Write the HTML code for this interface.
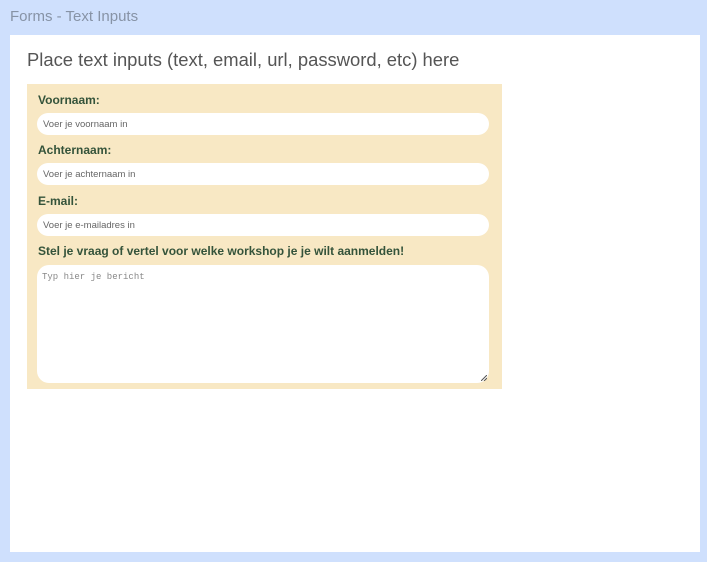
<!DOCTYPE html>
<html><head><style>
*{margin:0;padding:0;box-sizing:border-box}
body{width:707px;height:562px;background:#cfe0fd;font-family:"Liberation Sans",sans-serif;position:relative;overflow:hidden}
.t{position:absolute;left:10px;top:8px;font-size:15px;color:#8793a6}
.p{position:absolute;left:10px;top:35px;width:690px;height:517px;background:#fff}
.h{position:absolute;left:27px;top:49px;font-size:18.4px;color:#555}
.f{position:absolute;left:27px;top:84px;width:475px;height:305px;background:#f8e8c4}
.l{position:absolute;left:11px;font-size:12px;font-weight:bold;color:#34533a;top:0}
.i{position:absolute;left:10px;width:452px;height:22px;background:#fff;border-radius:11px;font-size:9.5px;color:#666;padding:6px 0 0 6px}
.ta{position:absolute;left:10px;top:181px;width:452px;height:118px;background:#fff;border-radius:12px;font-family:"Liberation Mono",monospace;font-size:9px;color:#888;padding:7px 0 0 5px}
</style></head><body>
<div class="t">Forms - Text Inputs</div>
<div class="p"></div>
<div class="h">Place text inputs (text, email, url, password, etc) here</div>
<div class="f">
<div class="l" style="top:9px">Voornaam:</div>
<div class="i" style="top:29px">Voer je voornaam in</div>
<div class="l" style="top:59px">Achternaam:</div>
<div class="i" style="top:79px">Voer je achternaam in</div>
<div class="l" style="top:110px">E-mail:</div>
<div class="i" style="top:130px">Voer je e-mailadres in</div>
<div class="l" style="top:160px">Stel je vraag of vertel voor welke workshop je je wilt aanmelden!</div>
<div class="ta">Typ hier je bericht
<svg style="position:absolute;right:2px;bottom:2px" width="6" height="6"><path d="M0 6L6 0M3 6L6 3" stroke="#555" stroke-width="1"/></svg></div>
</div>
</body></html>
